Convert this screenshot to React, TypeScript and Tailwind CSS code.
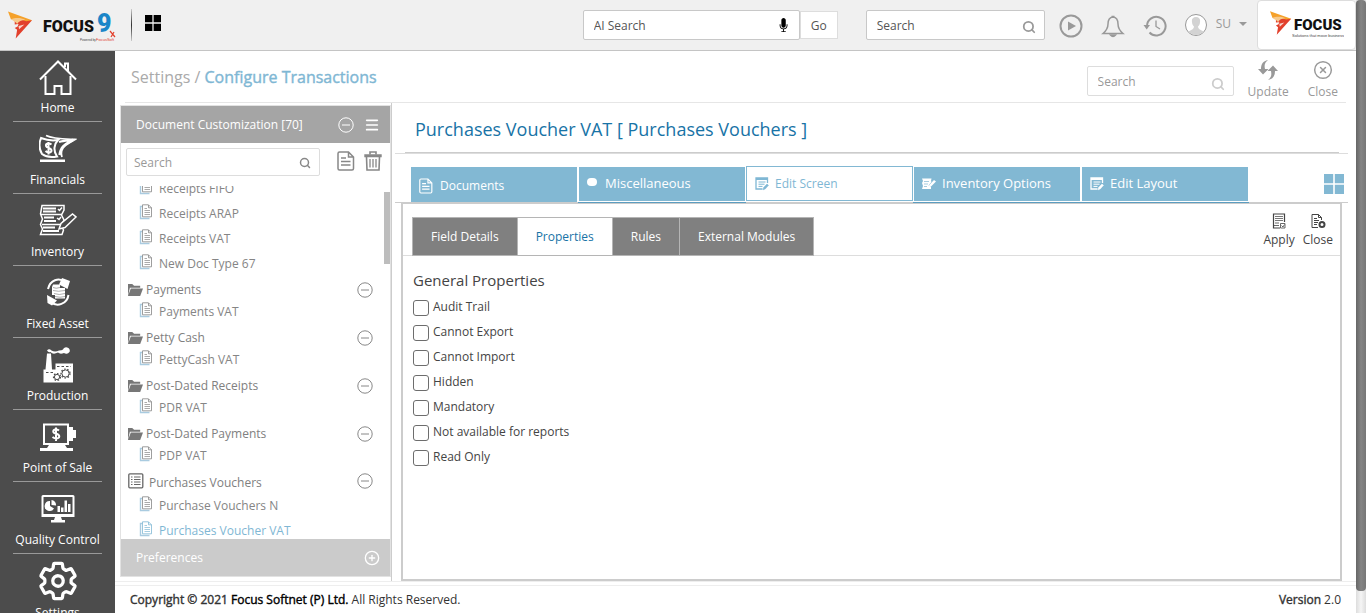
import type { ReactNode } from "react";
import { CircleX, Search, Menu, CirclePlus } from "lucide-react";
import { ImFolderOpen, ImMic } from "react-icons/im";
import { IoSettingsOutline } from "react-icons/io5";

function LogoMark({ className }: { className: string }) {
  return (
    <svg viewBox="0 0 26 28" className={className} aria-hidden="true">
      <path d="M0 0 L25 9 L20 12 L15 9.5 L3 8 Z" fill="#f5a12a" />
      <path d="M7 9 L14 8.5 L19 10 L25 9 L8 28 L9.500 19 L7 17 L10 15.500 L11 13 L7 13.500 Z" fill="#e2402c" />
      <path d="M3 8 C7 6.500 13 6 18 8.500 C14 9 11 10 9.500 13 C8.500 11 6 10 3 8 Z" fill="#f7c98b" />
      <path d="M11 15 L17 13.500 L11.500 18.500 Z" fill="#f6d7cf" />
    </svg>
  );
}

function HomeIcon() {
  return (
    <svg viewBox="0 0 38 36" className="h-9 w-[38px]" fill="none" stroke="currentColor" strokeWidth="2" aria-hidden="true">
      <path d="M1 20.500 L19 2.500 L37 20.500" />
      <path d="M6.500 17 V35 H15.500 V27 H22.500 V35 H31.500 V17" />
      <path d="M26 8 V4.500 H29 V12" />
    </svg>
  );
}

function FinancialsIcon() {
  return (
    <svg viewBox="0 0 38 36" className="h-9 w-[38px]" fill="none" stroke="currentColor" aria-hidden="true">
      <path d="M2 7 C7 9 13 10 19 9 C15 13 14 20 18 25.500 C11 27 7 26 3 23 C0 18 0 12 2 7 Z" strokeWidth="2" />
      <path d="M7 4.500 C14 8 26 8 36 8.500 C29 13 27 13 24 17 C22 20 22 23 23 26" strokeWidth="1.8" />
      <path d="M20 11 C24 9.500 30 9.500 34 9 C27 13 22 14 20.500 24" strokeWidth="2.4" />
      <rect x="1" y="28.500" width="25" height="2.500" fill="currentColor" stroke="none" />
      <path d="M12.500 13.500 C10 11.500 6.500 12.500 7 15 C7.500 17.500 12.500 16.500 12.500 19.500 C12.500 22 8.500 22 6.500 20 M9.500 11 V23.500" strokeWidth="2" />
    </svg>
  );
}

function InventoryIcon() {
  return (
    <svg viewBox="0 0 38 36" className="h-9 w-[38px]" fill="none" stroke="currentColor" strokeWidth="1.5" aria-hidden="true">
      <path d="M3 2.500 H25 V7 L22.500 12 L25 17 L22 22.500 L24.500 27 L23 31.500 H1.500 L3.500 26 L1.500 21.500 L3.500 16 L1.500 11 Z" />
      <path d="M2 11.500 H23 M3 21.500 H23" />
      <path d="M4 5.500 H17 M4 8.500 H17 M5 14.500 H15 M5 18 H17 M4 24.500 H16 M4 28 H20" strokeWidth="2" />
      <path d="M19 6 L20.500 7.500 L23 4.500 M18 15 L20 16.500 L22 14" />
      <path d="M20 26 L22 20.500 L33.500 11 L37 14 L26 24.500 Z" fill="#4c4c4c" />
    </svg>
  );
}

function FixedAssetIcon() {
  return (
    <svg viewBox="0 0 38 36" className="h-9 w-[38px]" fill="none" stroke="currentColor" aria-hidden="true">
      <path d="M9 14 C11 5 20 2 26 7" strokeWidth="2" />
      <path d="M23 3 L31 6 L28.500 14 L20 9.500 Z" fill="currentColor" stroke="none" />
      <path d="M29.500 20 C28 29 18 32.500 12 27" strokeWidth="2" />
      <path d="M8 20 L18 25.500 L13 30.500 L8.500 28 Z" fill="currentColor" stroke="none" />
      <path d="M14 9.500 H21 V13 H26 V23.500 H16 V20 H13 V12 Z" fill="currentColor" stroke="none" />
      <path d="M14 12.500 Q17 14 21 12.500 M14 15.500 Q19 17 26 15.500 M15 18.500 Q20 20.500 26 18.500 M16 21.500 Q21 23 26 21.500" stroke="#8a8a8a" strokeWidth="0.7" />
    </svg>
  );
}

function Cog({ x, y, r }: { x: number; y: number; r: number }) {
  return (
    <g fill="none" stroke="#4c4c4c">
      <circle cx={x} cy={y} r={r} strokeWidth="1" />
      <circle cx={x} cy={y} r={r + 0.9} strokeWidth="1.2" strokeDasharray="1.6 1.6" />
    </g>
  );
}

function ProductionIcon() {
  return (
    <svg viewBox="0 0 38 36" className="h-9 w-[38px]" fill="currentColor" aria-hidden="true">
      <path d="M4.500 35.500 V22.500 H6.500 L8 6.500 H12 L13 22.500 H16.500 V16.500 H34 V35.500 Z" />
      <path d="M8 3.500 Q10 1 12.500 3.500 Q16 5.500 20 3.500 Q23 3.500 24 2.500 A3.500 3.200 0 1 1 25 6 Q21 7.500 19 5.500 Q14 8 11.500 5 Q9.500 6 8 3.500 Z" />
      <path d="M18 19.500 H32" stroke="#4c4c4c" strokeWidth="1" strokeDasharray="2.500 2" />
      <path d="M7 25.500 H14" stroke="#4c4c4c" strokeWidth="1" strokeDasharray="2.500 2" />
      <Cog x={26.5} y={26.5} r={3.6} />
      <Cog x={18} y={30} r={2.6} />
    </svg>
  );
}

function PointOfSaleIcon() {
  return (
    <svg viewBox="0 0 38 36" className="h-9 w-[38px]" fill="currentColor" aria-hidden="true">
      <path fillRule="evenodd" d="M4 4.500 H30 V26 H26 L28 29 H34 V32 H1 V29 H8 L10 26 H4 Z M6 6.500 V24 H28 V6.500 Z" />
      <path d="M30 8 H34 V11 H37 V19 H34 V22 H30 Z" />
      <path d="M20 11.500 C17.500 9.500 14 10.500 14.300 13 C15 15.500 20.300 14 20.300 17.500 C20 20 16 20 13.500 18 M17 8.500 V22" fill="none" stroke="currentColor" strokeWidth="2" />
    </svg>
  );
}

function QualityIcon() {
  return (
    <svg viewBox="0 0 38 36" className="h-9 w-[38px]" fill="currentColor" aria-hidden="true">
      <path fillRule="evenodd" d="M4 4 H34 a1.500 1.500 0 0 1 1.500 1.500 V26 H2.500 V5.500 A1.500 1.500 0 0 1 4 4 Z M4.500 6 V23 H33.500 V6 Z" />
      <path d="M16 26 H22 L23 29 H26 V31.500 H12 V29 H15 Z" />
      <path d="M11 10 V15 L15 17.500 A5 5 0 1 1 11 10 Z M12.500 9 A5 5 0 0 1 17 14.500 L12.500 14 Z" />
      <path d="M18.500 15 H21 V21 H18.500 Z M22 16.500 H24.500 V21 H22 Z M25.500 9.500 H28 V21 H25.500 Z M29 13 H31.500 V21 H29 Z" />
    </svg>
  );
}

const modules: { name: string; icon: ReactNode }[] = [
  { name: "Home", icon: <HomeIcon /> },
  { name: "Financials", icon: <FinancialsIcon /> },
  { name: "Inventory", icon: <InventoryIcon /> },
  { name: "Fixed Asset", icon: <FixedAssetIcon /> },
  { name: "Production", icon: <ProductionIcon /> },
  { name: "Point of Sale", icon: <PointOfSaleIcon /> },
  { name: "Quality Control", icon: <QualityIcon /> },
  { name: "Settings", icon: <IoSettingsOutline className="size-[42px] [&_path]:stroke-[40]" /> },
];

function GridIcon({ className }: { className: string }) {
  return (
    <svg viewBox="0 0 20 20" className={className} fill="currentColor" aria-hidden="true">
      <path d="M0 0 H9.200 V9.200 H0 Z M10.800 0 H20 V9.200 H10.800 Z M0 10.800 H9.200 V20 H0 Z M10.800 10.800 H20 V20 H10.800 Z" />
    </svg>
  );
}

function PagesIcon() {
  return (
    <svg viewBox="0 0 14 16" className="h-4 w-3.5 shrink-0" fill="none" stroke="currentColor" aria-hidden="true">
      <path d="M3.500 2.500 H1.500 V14.500 H10.500" stroke="#a9cbe0" strokeWidth="1.400" />
      <path d="M3.500 0.800 H9.500 L12.500 3.800 V12.800 H3.500 Z M9.500 1 V3.800 H12.500" strokeWidth="0.800" />
      <path d="M5.500 4.500 H8 M5.500 6.500 H11 M5.500 8.500 H11 M5.500 10.500 H11" strokeWidth="0.700" />
    </svg>
  );
}

function DocIcon({ className }: { className: string }) {
  return (
    <svg viewBox="0 0 18 20" className={className} fill="none" stroke="currentColor" strokeWidth="1.500" aria-hidden="true">
      <path d="M2.500 1 H11.500 L16.500 6 V17.500 Q16.500 19 15 19 H2.500 Q1 19 1 17.500 V2.500 Q1 1 2.500 1 Z M11.500 1 V6 H16.500" />
      <path d="M4 7 H9 M4 10.500 H13.500 M4 14 H13.500" />
    </svg>
  );
}

function BinIcon() {
  return (
    <svg viewBox="0 0 18 20" className="h-5 w-[18px]" fill="none" stroke="currentColor" aria-hidden="true">
      <path d="M1 5.500 V4 H17 V5.500 Z" strokeWidth="1.400" />
      <path d="M6 3.500 V1 H12 V3.500" strokeWidth="1.600" />
      <path d="M2.500 6 L3 19 H15 L15.500 6" strokeWidth="1.600" />
      <path d="M6 8 V16.500 M9 8 V16.500 M12 8 V16.500" strokeWidth="1.300" />
    </svg>
  );
}

function ListBoxIcon() {
  return (
    <svg viewBox="0 0 16 16" className="size-4" fill="none" stroke="currentColor" aria-hidden="true">
      <rect x="0.800" y="0.800" width="14" height="14" rx="1" strokeWidth="1.300" />
      <path d="M3 4 H4.500 M3 6.500 H4.500 M3 9 H4.500 M3 11.500 H4.500 M6 4 H12.500 M6 6.500 H12.500 M6 9 H12.500 M6 11.500 H12.500" />
    </svg>
  );
}

function EditFormIcon() {
  return (
    <svg viewBox="0 0 14 14" className="size-3.5 shrink-0" fill="none" stroke="currentColor" aria-hidden="true">
      <path d="M12.500 6 V1 H1 V12 H7.500" strokeWidth="1.300" />
      <path d="M1 2 H12.500" strokeWidth="2" />
      <path d="M3.500 5 H10.500 M3.500 7.200 H9.500 M3.500 9.400 H7.500" />
      <path d="M8 12.800 L8.600 10.500 L12 7 L13.500 8.300 L10.200 12 Z" fill="currentColor" strokeWidth="0.500" />
    </svg>
  );
}

function SheetPenIcon() {
  return (
    <svg viewBox="0 0 14 14" className="size-3.5 shrink-0" fill="currentColor" aria-hidden="true">
      <path d="M0 1.500 H9.500 L9 4 L9.500 5 L6.500 8.500 L9 10 V12 H0 L1 9 L0 6 L1 4 Z" />
      <path d="M2 4.500 H7 M2 7 H6 M2 9.500 H5" stroke="#82b8d3" strokeWidth="0.700" />
      <path d="M6.500 10.500 L7.300 8 L12 3 L14 4.500 L9 9.500 Z" />
    </svg>
  );
}

function MinusCircle({ className }: { className: string }) {
  return (
    <svg viewBox="0 0 16 16" className={className} fill="none" stroke="currentColor" aria-hidden="true">
      <circle cx="8" cy="8" r="7.200" />
      <path d="M4 8 H12" />
    </svg>
  );
}

type Group = { name: string; boxed?: boolean; items: string[] };

const leading = ["Receipts FIFO", "Receipts ARAP", "Receipts VAT", "New Doc Type 67"];
const groups: Group[] = [
  { name: "Payments", items: ["Payments VAT"] },
  { name: "Petty Cash", items: ["PettyCash VAT"] },
  { name: "Post-Dated Receipts", items: ["PDR VAT"] },
  { name: "Post-Dated Payments", items: ["PDP VAT"] },
  { name: "Purchases Vouchers", boxed: true, items: ["Purchase Vouchers N", "Purchases Voucher VAT"] },
];

function TreeLeaf({ name }: { name: string }) {
  const selected = name === "Purchases Voucher VAT";
  return (
    <li className="h-[25px] shrink-0">
      <a
        href="#"
        className={
          selected
            ? "flex h-full items-center gap-1.5 pl-[18px] text-[#7fb7d4]"
            : "flex h-full items-center gap-1.5 pl-[18px] text-[#858585]"
        }
      >
        <span className="pb-1"><PagesIcon /></span>
        {name}
      </a>
    </li>
  );
}

function TreeGroup({ group }: { group: Group }) {
  return (
    <li>
      <div className={group.boxed ? "flex h-[25px] items-center pr-[17px] pl-[7px]" : "flex h-[23px] items-center pt-1 pr-[17px] pl-[7px]"}>
        {group.boxed ? (
          <span className="mr-[5px] text-[#666]"><ListBoxIcon /></span>
        ) : (
          <ImFolderOpen className="mr-[3px] size-[15px] text-[#777]" />
        )}
        <span className={group.boxed ? "flex-1 pt-1" : "flex-1"}>{group.name}</span>
        <button type="button" aria-label={"Collapse " + group.name} className="text-[#888]">
          <MinusCircle className="size-4" />
        </button>
      </div>
      <ul>
        {group.items.map((item) => (
          <TreeLeaf key={item} name={item} />
        ))}
      </ul>
    </li>
  );
}

const screenTabs: { name: string; icon: ReactNode }[] = [
  { name: "Documents", icon: <DocIcon className="mr-px h-4 w-3.5" /> },
  { name: "Miscellaneous", icon: <span className="mr-0.5 mb-1 block h-2 w-2.5 rounded-full bg-white" /> },
  { name: "Edit Screen", icon: <EditFormIcon /> },
  { name: "Inventory Options", icon: <SheetPenIcon /> },
  { name: "Edit Layout", icon: <EditFormIcon /> },
];

const detailTabs = ["Field Details", "Properties", "Rules", "External Modules"];

const properties = [
  "Audit Trail",
  "Cannot Export",
  "Cannot Import",
  "Hidden",
  "Mandatory",
  "Not available for reports",
  "Read Only",
];

function TopBar() {
  return (
    <header className="flex h-[51px] shrink-0 items-center border-b border-[#c4c4c4] bg-[#f0f0f0]">
      <a href="#" aria-label="Focus 9" className="flex items-center pl-2">
        <LogoMark className="h-7 w-[25px]" />
        <svg viewBox="0 0 76 34" className="ml-2 h-[34px] w-[76px]" aria-hidden="true">
          <text x="2" y="24" fontFamily="Roboto, sans-serif" fontWeight="900" fontSize="16" fill="#111">FOCUS</text>
          <text x="56" y="24" fontFamily="Roboto, sans-serif" fontWeight="900" fontSize="25" fill="#1b86c8">9</text>
          <text x="39" y="33" fontFamily="Liberation Sans, sans-serif" fontSize="3" fill="#444">Powered by</text>
          <text x="55" y="33" fontFamily="Liberation Sans, sans-serif" fontSize="4" fill="#e2402c">FocusSoft</text>
          <path d="M69 23 L74 29 M73 24 L70 29" stroke="#e2402c" strokeWidth="1.200" />
        </svg>
      </a>
      <span className="ml-3.5 h-8 w-px bg-gradient-to-b from-[#ccc] via-[#333] to-[#ccc]" />
      <button type="button" aria-label="Applications" className="mb-1 ml-[13px] text-black">
        <GridIcon className="size-4" />
      </button>
      <form className="ml-auto flex items-center">
        <label className="flex h-[30px] w-[217px] items-center rounded-xs border border-[#c8c8c8] bg-white pr-2 pl-2.5">
          <input type="text" aria-label="AI Search" placeholder="AI Search" className="min-w-0 flex-1 pt-0.5 text-xs outline-none placeholder:text-[#555]" />
          <ImMic className="size-3.5 text-black" />
        </label>
        <button type="button" className="h-7 w-[38px] border border-[#ddd] bg-white pt-0.5 text-xs text-[#555]">Go</button>
      </form>
      <label className="ml-7 flex h-[30px] w-[179px] items-center rounded-xs border border-[#c8c8c8] bg-white pr-2 pl-2.5">
        <input type="text" aria-label="Search" placeholder="Search" className="min-w-0 flex-1 pt-0.5 text-xs outline-none placeholder:text-[#555]" />
        <Search className="mt-1 size-3.5 text-[#999]" strokeWidth={3} />
      </label>
      <div className="flex items-center pt-0.5 text-[#999]">
        <button type="button" aria-label="Run" className="ml-3.5">
          <svg viewBox="0 0 24 24" className="size-6" fill="none" stroke="currentColor" strokeWidth="2" aria-hidden="true">
            <circle cx="12" cy="12" r="10.500" />
            <path d="M9 7.500 L17 12 L9 16.500 Z" fill="currentColor" stroke="none" />
          </svg>
        </button>
        <button type="button" aria-label="Notifications" className="ml-[18px]">
          <svg viewBox="0 0 24 24" className="size-6" fill="none" stroke="currentColor" strokeWidth="1.500" aria-hidden="true">
            <path d="M12 3 C8 3.500 7 7 7 10 C7 15 5 17 2 19.500 H22 C19 17 17 15 17 10 C17 7 16 3.500 12 3 Z" />
            <path d="M10.500 2.500 H13.500 M9.500 21 Q12 24 14.500 21 Z" fill="currentColor" />
          </svg>
        </button>
        <button type="button" aria-label="History" className="ml-[18px]">
          <svg viewBox="0 0 24 24" className="size-6" fill="none" stroke="currentColor" strokeWidth="2" aria-hidden="true">
            <path d="M4 12 A9.300 9.300 0 1 1 6.500 18.500" />
            <path d="M0.500 11 H7 L3.700 15.500 Z" fill="currentColor" stroke="none" />
            <path d="M13 6.500 V12.500 L17 15" strokeWidth="1.300" />
          </svg>
        </button>
        <button type="button" className="ml-[17px] flex items-center">
          <svg viewBox="0 0 24 24" className="mb-0.5 size-6" aria-hidden="true">
            <circle cx="12" cy="12" r="10.500" fill="#fff" stroke="#999" />
            <path d="M12 4 C8.500 4 7.500 6.500 8 9 C8 11 9 12.500 10 13.500 C10 16 8 16.500 4.500 18.500 A10 10 0 0 0 19.500 18.500 C16 16.500 14 16 14 13.500 C15 12.500 16 11 16 9 C16.500 6.500 15.500 4 12 4 Z" fill="#d3d3d3" />
          </svg>
          <span className="mb-1 ml-2 text-xs">SU</span>
          <span className="mb-1 ml-2 border-x-4 border-t-4 border-x-transparent border-t-[#999]" />
        </button>
      </div>
      <a href="#" aria-label="Focus" className="ml-2.5 flex h-[50px] w-[99px] items-center justify-center rounded-sm border border-[#ddd] bg-white">
        <LogoMark className="mb-1 h-6 w-[22px]" />
        <svg viewBox="0 0 52 30" className="h-[30px] w-[52px]" aria-hidden="true">
          <text x="2" y="20" fontFamily="Roboto, sans-serif" fontWeight="900" fontSize="15" fill="#111">FOCUS</text>
          <text x="0" y="27" fontFamily="Liberation Sans, sans-serif" fontSize="4" fill="#444">Solutions that move business</text>
        </svg>
      </a>
    </header>
  );
}

function Sidebar() {
  return (
    <nav className="w-[115px] shrink-0 overflow-hidden bg-[#4c4c4c] px-[13px] text-white">
      <ul className="-mt-px">
        {modules.map((m) => (
          <li key={m.name} className="h-[72px] border-b border-[#999]">
            <a href="#" className="flex h-full flex-col items-center pt-2">
              <span className="flex h-[38px] items-center">{m.icon}</span>
              <span className="text-xs leading-[26px] whitespace-nowrap">{m.name}</span>
            </a>
          </li>
        ))}
      </ul>
    </nav>
  );
}

function DocumentPanel() {
  return (
    <aside className="w-[272px] shrink-0 border-r border-[#ccc] pt-0.5 pb-1">
      <div className="flex h-full flex-col border border-[#e2e2e2]">
        <div className="flex h-[37px] shrink-0 items-center bg-[#a5a5a5] pr-2.5 pl-[15px] text-white">
          <h2 className="flex-1 text-xs">Document Customization [70]</h2>
          <button type="button" aria-label="Collapse all" className="mr-2.5">
            <MinusCircle className="size-4" />
          </button>
          <button type="button" aria-label="Menu">
            <Menu className="size-4" strokeWidth={2.5} />
          </button>
        </div>
        <div className="flex h-[43px] shrink-0 items-start px-[5px] pt-[5px]">
          <label className="flex h-7 flex-1 items-center rounded-xs border border-[#ddd] pr-2 pl-[7px]">
            <input type="text" aria-label="Search documents" placeholder="Search" className="min-w-0 flex-1 pt-0.5 text-xs outline-none placeholder:text-[#999]" />
            <Search className="mt-0.5 size-3 text-[#888]" strokeWidth={3} />
          </label>
          <button type="button" aria-label="New document" className="mt-[3px] ml-[17px] text-[#888]">
            <DocIcon className="h-5 w-[18px]" />
          </button>
          <button type="button" aria-label="Delete" className="mt-[3px] mr-[3px] ml-[9px] text-[#888]">
            <BinIcon />
          </button>
        </div>
        <div className="relative min-h-0 flex-1 overflow-hidden text-xs text-[#808080]">
          <ul className="-mt-2.5">
            {leading.map((item) => (
              <TreeLeaf key={item} name={item} />
            ))}
            {groups.map((g) => (
              <TreeGroup key={g.name} group={g} />
            ))}
          </ul>
          <span className="absolute top-1.5 right-0 h-[72px] w-1.5 bg-[#bdbdbd]" />
        </div>
        <div className="flex h-[37px] shrink-0 items-center bg-[#cbcbcb] pr-2.5 pl-[15px] text-white">
          <h2 className="flex-1 text-xs">Preferences</h2>
          <button type="button" aria-label="Expand preferences">
            <CirclePlus className="size-4" />
          </button>
        </div>
      </div>
    </aside>
  );
}

function ScreenTabs() {
  return (
    <div className="flex border-b border-[#ccc] pt-3 pl-[15px]">
      <ul className="-mb-px flex flex-1">
        {screenTabs.map((t) => (
          <li key={t.name} className="flex h-[37px] flex-col">
            {t.name === "Edit Screen" ? (
              <button type="button" className="flex h-[35px] w-[167px] items-center gap-1.5 border border-[#82b8d3] bg-white pl-2 text-xs text-[#7fb7d4]">
                {t.icon}
                {t.name}
              </button>
            ) : t.name === "Documents" ? (
              <button type="button" className="flex h-9 w-[168px] items-center gap-1.5 border-x border-t border-white bg-[#82b8d3] pt-0.5 pl-2 text-xs text-white">
                {t.icon}
                {t.name}
              </button>
            ) : (
              <span className="border-b border-[#5c9dc0]">
                <button type="button" className="flex h-9 w-[168px] items-center gap-1.5 border border-white bg-[#82b8d3] pl-2 text-[13px] text-white">
                  {t.icon}
                  {t.name}
                </button>
              </span>
            )}
          </li>
        ))}
      </ul>
      <button type="button" aria-label="Tiles" className="mr-1 text-[#82b8d3]">
        <GridIcon className="size-5" />
      </button>
    </div>
  );
}

function Editor() {
  return (
    <section className="flex min-w-0 flex-1 flex-col pr-2 pl-[3px]">
      <h1 className="mr-[9px] ml-2.5 h-[50px] border-b border-[#ccc] pt-3.5 pl-2.5 text-lg leading-6 text-[#1873a6]">
        Purchases Voucher VAT [ Purchases Vouchers ]
      </h1>
      <div className="border-t border-[#ddd]">
        <ScreenTabs />
      </div>
      <div className="mr-1.5 ml-1.5 flex min-h-0 flex-1 flex-col border-2 border-t border-[#ccc]">
        <div className="flex h-[52px] shrink-0 items-end justify-between border-b border-[#ddd] pr-[7px] pl-[9px]">
          <ul className="-mb-px flex">
            {detailTabs.map((t) => (
              <li key={t} className="-mr-px">
                <button
                  type="button"
                  className={
                    t === "Properties"
                      ? "h-[39px] border border-[#b5b5b5] bg-white px-[18px] text-xs text-[#1873a6]"
                      : "h-[39px] border border-[#b5b5b5] bg-[#808080] px-[18px] text-xs text-white"
                  }
                >
                  {t}
                </button>
              </li>
            ))}
          </ul>
          <div className="flex gap-2 self-start pt-2 text-xs leading-5 text-[#444]">
            <button type="button" className="flex flex-col items-center">
              <svg viewBox="0 0 16 18" className="h-[18px] w-4" fill="none" stroke="currentColor" aria-hidden="true">
                <path d="M9 16 H2.500 V2 H13.500 V10" strokeWidth="1.200" />
                <path d="M4 4.500 H12 M4 6.500 H12 M4 8.500 H12" stroke="#777" strokeWidth="1.200" />
                <path d="M4 11 H8 M3 13.500 H8" strokeWidth="0.800" />
                <path d="M9.500 11.500 H14 V16 H9.500 Z M10.500 13.500 L12 15 L13.500 12.500" strokeWidth="0.800" />
              </svg>
              Apply
            </button>
            <button type="button" className="flex flex-col items-center">
              <svg viewBox="0 0 16 18" className="h-[18px] w-4" fill="none" stroke="currentColor" aria-hidden="true">
                <path d="M8 15.500 H2 V2.500 H8.500 L11.500 5.500 V8 M8.500 2.500 V5.500 H11.500 M4 6.500 H7 M4 8.500 H9 M4 10.500 H8 M4 12.500 H7" />
                <circle cx="12" cy="12.500" r="2.500" strokeWidth="2" />
              </svg>
              Close
            </button>
          </div>
        </div>
        <fieldset className="px-2.5 pt-3.5">
          <legend className="float-left mb-[5px] w-full text-[15px] leading-5 text-[#444]">General Properties</legend>
          {properties.map((p) => (
            <label key={p} className="flex h-[25px] w-full gap-1 text-xs text-[#444]">
              <input type="checkbox" className="mt-[5px] size-4 shrink-0 appearance-none rounded-[3px] border border-[#6d6d6d] bg-white" />
              <span className="leading-6">{p}</span>
            </label>
          ))}
        </fieldset>
      </div>
    </section>
  );
}

export default function App() {
  return (
    <div className="flex h-screen overflow-hidden bg-white font-['Open_Sans',sans-serif]">
      <div className="flex min-w-0 flex-1 flex-col">
        <TopBar />
        <div className="flex min-h-0 flex-1">
          <Sidebar />
          <main className="flex min-w-0 flex-1 flex-col">
            <div className="mx-2.5 flex h-[52px] shrink-0 items-center border-b border-[#e6e6e6] pl-1.5">
              <nav aria-label="Breadcrumb" className="flex-1 text-base">
                <a href="#" className="text-[#aaa]">Settings / </a>
                <span className="text-[#7fb7d4] [-webkit-text-stroke:0.4px_#7fb7d4]">Configure Transactions</span>
              </nav>
              <label className="mt-2 flex h-[30px] w-[147px] items-center rounded-xs border border-[#ddd] pr-2 pl-2.5">
                <input type="text" aria-label="Search settings" placeholder="Search" className="min-w-0 flex-1 pt-0.5 text-xs outline-none placeholder:text-[#999]" />
                <Search className="mt-1.5 size-3.5 text-[#ccc]" strokeWidth={3} />
              </label>
              <button type="button" className="ml-3.5 flex flex-col items-center pt-1.5 text-xs text-[#999]">
                <svg viewBox="0 0 20 20" className="mb-1 size-5" fill="currentColor" aria-hidden="true">
                  <path d="M10 0 C6 3 6.500 6 7 9 L10.500 9 L5 14.500 L0 9 L3 9 C3 4 5 1 10 0 Z" />
                  <path d="M10 20 C14 17 13.500 14 13 11 L9.500 11 L15 5.500 L20 11 L17 11 C17 16 15 19 10 20 Z" />
                </svg>
                Update
              </button>
              <button type="button" className="mr-2 ml-[19px] flex flex-col items-center pt-1.5 text-xs text-[#999]">
                <CircleX className="mb-1 size-5" strokeWidth={1.75} />
                Close
              </button>
            </div>
            <div className="flex min-h-0 flex-1 border-b border-[#eee] pl-[5px]">
              <DocumentPanel />
              <Editor />
            </div>
            <footer className="mt-[3px] flex h-7 shrink-0 items-center justify-between border-t border-[#eee] px-[15px] text-xs text-[#333]">
              <p>
                <span className="[-webkit-text-stroke:0.4px]">Copyright © 2021 <b className="font-normal text-black">Focus Softnet (P) Ltd.</b></span> All Rights Reserved.
              </p>
              <p>
                <span className="[-webkit-text-stroke:0.4px]">Version</span> 2.0
              </p>
            </footer>
          </main>
        </div>
      </div>
      <div aria-hidden="true" className="w-2.5 shrink-0 bg-gradient-to-r from-[#ddd] via-[#f5f5f5] to-[#ddd]">
        <div className="h-[96.4%] rounded-sm bg-gradient-to-r from-[#666] via-[#858585] to-[#777]" />
      </div>
    </div>
  );
}
